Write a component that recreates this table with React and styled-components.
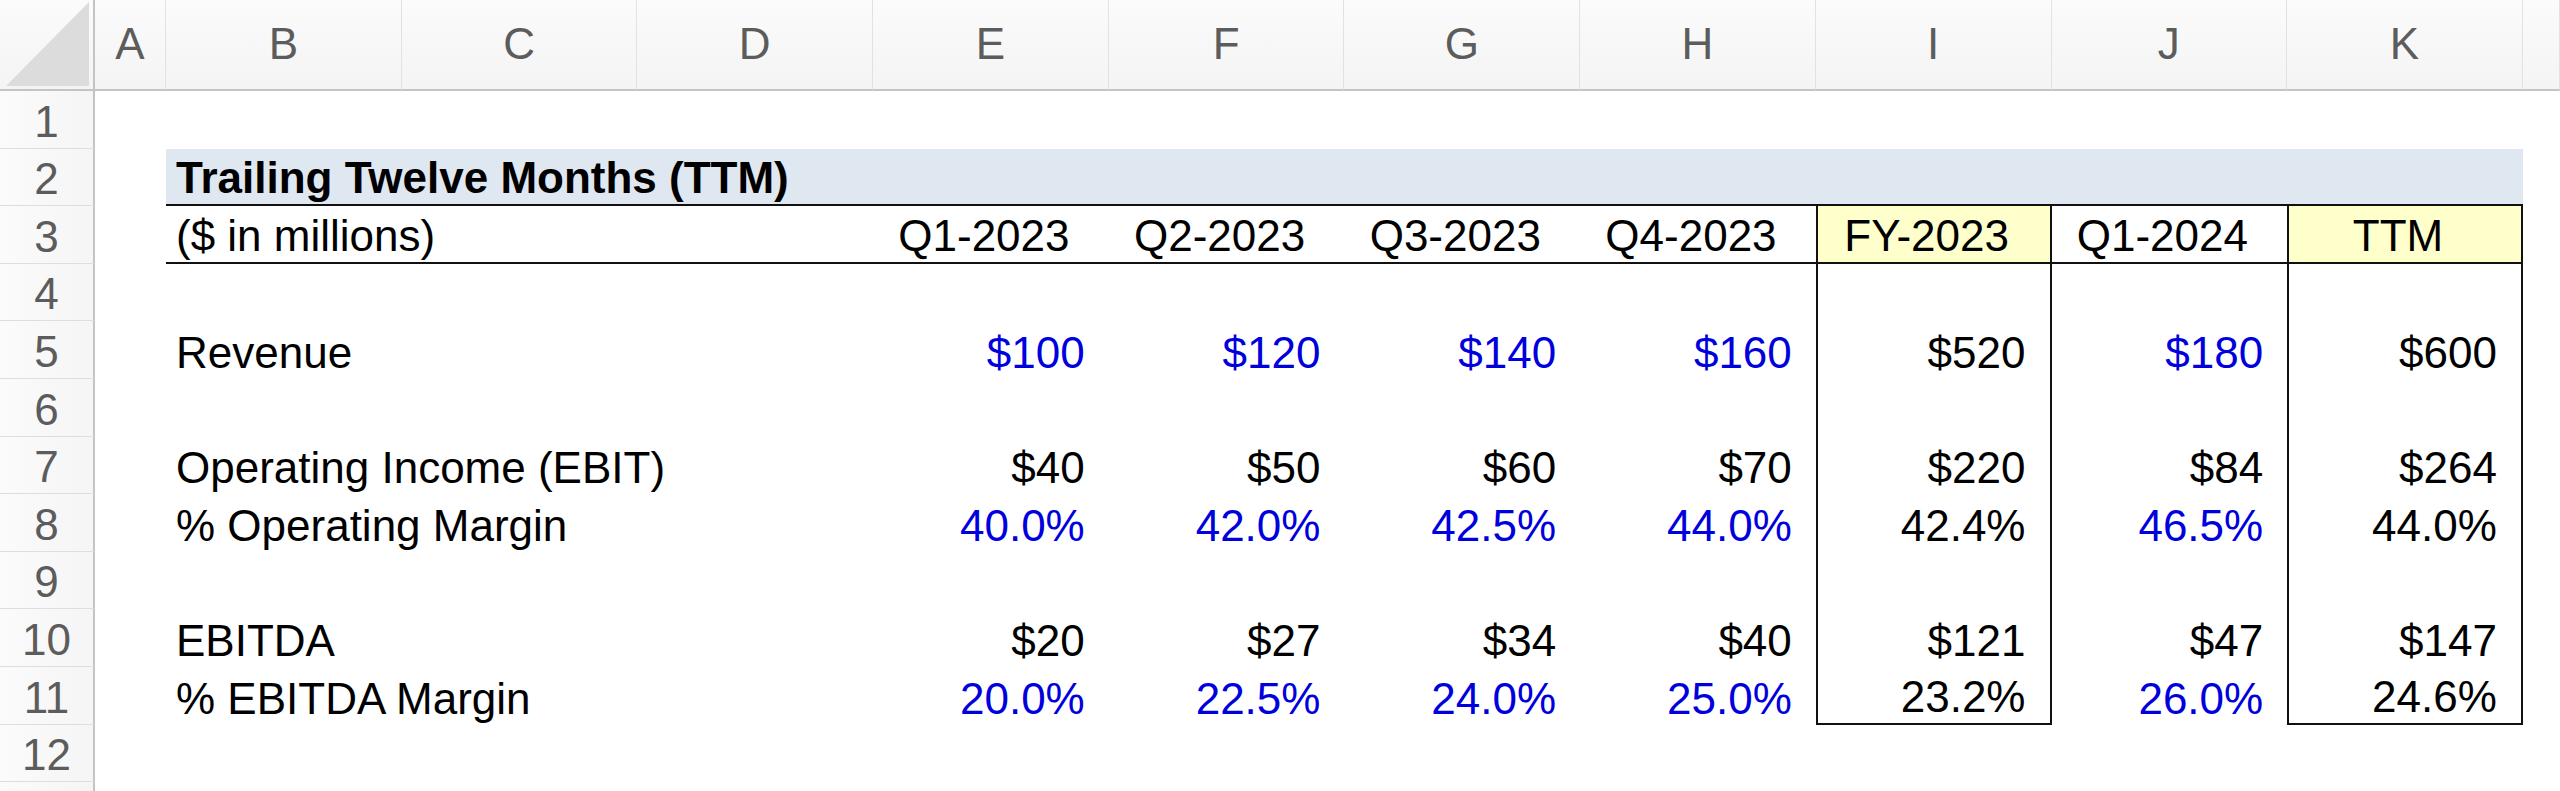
import React from 'react';
import styled, { createGlobalStyle } from 'styled-components';

const GlobalStyle = createGlobalStyle`
  html, body {
    margin: 0;
    padding: 0;
    background: #ffffff;
    overflow: hidden;
  }
  body {
    font-family: "Liberation Sans", Arial, Helvetica, sans-serif;
  }
`;

const TEMPLATE = '95px 71px repeat(10, 235.7px) 1fr';
const ROW_H = 57.6;

const Sheet = styled.div`
  display: flex;
  flex-direction: column;
  width: 2560px;
  height: 791px;
  overflow: hidden;
  font-family: "Liberation Sans", Arial, Helvetica, sans-serif;
  font-size: 44px;
  line-height: 1;
  color: #000;
`;

const HeaderRow = styled.div`
  display: grid;
  grid-template-columns: ${TEMPLATE};
  height: 91px;
  flex: none;
`;

const Corner = styled.div`
  position: relative;
  box-sizing: border-box;
  background: linear-gradient(#fbfbfb, #f4f4f4);
  border-right: 2px solid #c4c4c4;
  border-bottom: 2px solid #c4c4c4;
`;

const SelectAll = styled.div`
  position: absolute;
  left: 6px;
  right: 4px;
  top: 2px;
  bottom: 3px;
  background: #dcdcdc;
  clip-path: polygon(100% 0, 100% 100%, 0 100%);
`;

const ColHead = styled.div`
  box-sizing: border-box;
  display: flex;
  align-items: center;
  justify-content: center;
  padding-bottom: 2px;
  background: linear-gradient(#fbfbfb, #f4f4f4);
  border-right: 1px solid #e2e2e2;
  border-bottom: 2px solid #c4c4c4;
  color: #5c5c5c;
  font-size: 44px;
`;

const Row = styled.div`
  display: grid;
  grid-template-columns: ${TEMPLATE};
  height: ${ROW_H}px;
  flex: none;
`;

const RowNum = styled.div`
  box-sizing: border-box;
  display: flex;
  align-items: flex-end;
  justify-content: center;
  padding-bottom: 4px;
  background: linear-gradient(90deg, #fbfbfb, #f5f5f5);
  border-right: 2px solid #c4c4c4;
  border-bottom: 1px solid #dedede;
  color: #5c5c5c;
`;

const fills = {
  blue: '#dfe7f0',
  yellow: '#ffffcc',
};

const Cell = styled.div`
  box-sizing: border-box;
  grid-column: span ${(p) => p.$span || 1};
  display: flex;
  align-items: flex-end;
  justify-content: ${(p) =>
    p.$align === 'right' ? 'flex-end' : p.$align === 'center' ? 'center' : 'flex-start'};
  padding-bottom: 4px;
  padding-left: ${(p) => (p.$align === 'left' ? '10px' : '0')};
  padding-right: ${(p) =>
    p.$align === 'right' ? '24px' : p.$align === 'center' ? '14px' : '0'};
  white-space: nowrap;
  background: ${(p) => (p.$fill ? fills[p.$fill] : 'transparent')};
  color: ${(p) => (p.$blue ? '#0000dd' : '#000')};
  font-weight: ${(p) => (p.$bold ? 700 : 400)};
  border-bottom: ${(p) => (p.$underline ? '2px solid #111' : 'none')};
  border-left: ${(p) => (p.$boxed ? '2px solid #111' : 'none')};
  border-right: ${(p) => (p.$boxed ? '2px solid #111' : 'none')};
`;

const LETTERS = ['A', 'B', 'C', 'D', 'E', 'F', 'G', 'H', 'I', 'J', 'K', ''];

const PERIODS = ['Q1-2023', 'Q2-2023', 'Q3-2023', 'Q4-2023', 'FY-2023', 'Q1-2024', 'TTM'];
const BOX_COLS = [4, 6];

// [text, isBlue]
const DATA = {
  5: {
    label: 'Revenue',
    values: [['$100', 1], ['$120', 1], ['$140', 1], ['$160', 1], ['$520', 0], ['$180', 1], ['$600', 0]],
  },
  7: {
    label: 'Operating Income (EBIT)',
    values: [['$40', 0], ['$50', 0], ['$60', 0], ['$70', 0], ['$220', 0], ['$84', 0], ['$264', 0]],
  },
  8: {
    label: '% Operating Margin',
    values: [['40.0%', 1], ['42.0%', 1], ['42.5%', 1], ['44.0%', 1], ['42.4%', 0], ['46.5%', 1], ['44.0%', 0]],
  },
  10: {
    label: 'EBITDA',
    values: [['$20', 0], ['$27', 0], ['$34', 0], ['$40', 0], ['$121', 0], ['$47', 0], ['$147', 0]],
  },
  11: {
    label: '% EBITDA Margin',
    values: [['20.0%', 1], ['22.5%', 1], ['24.0%', 1], ['25.0%', 1], ['23.2%', 0], ['26.0%', 1], ['24.6%', 0]],
  },
};

const VISIBLE_ROWS = 12;

function SheetRow({ n }) {
  const label = n <= VISIBLE_ROWS ? n : '';
  if (n === 2) {
    return (
      <Row>
        <RowNum>{label}</RowNum>
        <Cell />
        <Cell $span={10} $align="left" $fill="blue" $bold $underline>
          Trailing Twelve Months (TTM)
        </Cell>
        <Cell />
      </Row>
    );
  }

  const inBox = n >= 3 && n <= 11;
  const isHeader = n === 3;
  const data = DATA[n];

  return (
    <Row>
      <RowNum>{label}</RowNum>
      <Cell />
      <Cell $span={3} $align="left" $underline={isHeader}>
        {isHeader ? '($ in millions)' : data ? data.label : ''}
      </Cell>
      {PERIODS.map((p, i) => {
        const boxed = inBox && BOX_COLS.includes(i);
        if (isHeader) {
          return (
            <Cell
              key={p}
              $align="center"
              $underline
              $boxed={boxed}
              $fill={boxed ? 'yellow' : undefined}
            >
              {p}
            </Cell>
          );
        }
        const v = data ? data.values[i] : null;
        return (
          <Cell
            key={p}
            $align="right"
            $boxed={boxed}
            $underline={boxed && n === 11}
            $blue={v ? v[1] === 1 : false}
          >
            {v ? v[0] : ''}
          </Cell>
        );
      })}
      <Cell />
    </Row>
  );
}

export default function App() {
  const rows = Array.from({ length: 13 }, (_, i) => i + 1);
  return (
    <>
      <GlobalStyle />
      <Sheet>
        <HeaderRow>
          <Corner>
            <SelectAll />
          </Corner>
          {LETTERS.map((l, i) => (
            <ColHead key={i}>{l}</ColHead>
          ))}
        </HeaderRow>
        {rows.map((n) => (
          <SheetRow key={n} n={n} />
        ))}
      </Sheet>
    </>
  );
}
